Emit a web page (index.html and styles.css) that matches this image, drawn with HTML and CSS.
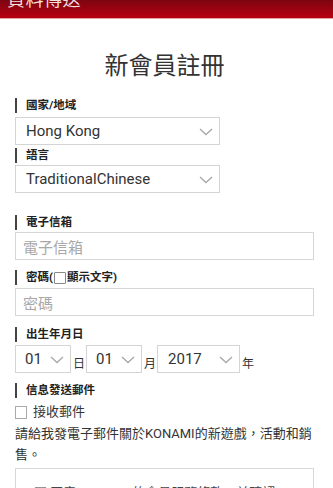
FILE: index.html
```html
<!DOCTYPE html>
<html lang="zh-Hant">
<head>
<meta charset="utf-8">
<link rel="stylesheet" href="styles.css">
</head>
<body>
<header class="topbar"><span class="topbar-title">資料傳送</span></header>
<main class="page">
  <h1 class="title">新會員註冊</h1>

  <div class="label">國家/地域</div>
  <div class="select select-wide"><span>Hong Kong</span><svg class="chev" viewBox="0 0 14 8"><path d="M1 1l6 5.5L13 1"/></svg></div>

  <div class="label label-tight">語言</div>
  <div class="select select-wide"><span>TraditionalChinese</span><svg class="chev" viewBox="0 0 14 8"><path d="M1 1l6 5.5L13 1"/></svg></div>

  <div class="label label-gap-lg">電子信箱</div>
  <div class="input">電子信箱</div>

  <div class="label label-gap">密碼(<span class="mini-check"></span>顯示文字)</div>
  <div class="input">密碼</div>

  <div class="label label-gap-md">出生年月日</div>
  <div class="date-row">
    <div class="select sel-day"><span>01</span><svg class="chev" viewBox="0 0 14 8"><path d="M1 1l6 5.5L13 1"/></svg></div>
    <span class="unit">日</span>
    <div class="select sel-day"><span>01</span><svg class="chev" viewBox="0 0 14 8"><path d="M1 1l6 5.5L13 1"/></svg></div>
    <span class="unit">月</span>
    <div class="select sel-year"><span>2017</span><svg class="chev" viewBox="0 0 14 8"><path d="M1 1l6 5.5L13 1"/></svg></div>
    <span class="unit">年</span>
  </div>

  <div class="label label-gap">信息發送郵件</div>
  <div class="check-row"><span class="checkbox"></span><span>接收郵件</span></div>
  <p class="note">請給我發電子郵件關於KONAMI的新遊戲，活動和銷售。</p>

  <div class="terms"><span class="terms-text">□ 同意 KONAMI 的會員服務條款，並確認</span></div>
</main>
</body>
</html>
```
FILE: styles.css
```css
* { box-sizing: border-box; }
html, body { margin: 0; padding: 0; background: #fff; }
body {
  font-family: Roboto, "Noto Sans CJK TC", "Noto Sans", sans-serif;
  color: #333;
  overflow: hidden;
  height: 488px;
}
.topbar {
  height: 19px;
  background: linear-gradient(#7c0510, #b80012);
  border-bottom: 1px solid #e4a0a4;
  overflow: hidden;
  padding-left: 7px;
}
.topbar-title {
  display: block;
  color: #f4dede;
  font-size: 18px;
  line-height: 18px;
  margin-top: -9px;
  letter-spacing: 0.5px;
}
.page {
  padding: 0 19px 0 15px;
}
.title {
  margin: 31px 0 0;
  font-size: 24px;
  line-height: 32px;
  font-weight: 400;
  text-align: center;
  color: #333;
}
.label {
  margin-top: 16px;
  height: 15px;
  border-left: 2px solid #444;
  padding-left: 9px;
  font-size: 11.5px;
  line-height: 15px;
  font-weight: 700;
  color: #222;
  display: flex;
  align-items: center;
}
.label-tight { margin-top: 3px; }
.label-gap-lg { margin-top: 22px; }
.label-gap { margin-top: 10px; }
.label-gap-md { margin-top: 11px; }
.mini-check {
  display: inline-block;
  width: 12px;
  height: 12px;
  border: 1px solid #888;
  border-radius: 1px;
  margin: 0 1px;
  background: #fff;
}
.label-gap-lg + .input { margin-top: 2px; }
.select {
  margin-top: 4px;
  height: 28px;
  border: 1px solid #d4d4d4;
  display: flex;
  align-items: center;
  justify-content: space-between;
  padding: 0 6px 0 10px;
  font-size: 15px;
  color: #333;
}
.label-tight + .select { margin-top: 2px; }
.select-wide { width: 205px; }
.chev {
  width: 14px;
  height: 8px;
  fill: none;
  stroke: #aaa;
  stroke-width: 1.4;
  margin-top: 1px;
}
.input {
  margin-top: 3px;
  height: 28px;
  border: 1px solid #d6d6d6;
  padding-left: 7px;
  display: flex;
  align-items: center;
  font-size: 15px;
  color: #a8a8a8;
}
.date-row {
  margin-top: 3px;
  display: flex;
  align-items: flex-end;
}
.date-row .select { margin-top: 0; padding: 0 6px 0 9px; }
.sel-day { width: 56px; }
.sel-year { width: 83px; padding-left: 10px !important; }
.unit {
  font-size: 12px;
  line-height: 14px;
  padding: 0 1px 2px 2px;
  color: #333;
}
.check-row {
  margin-top: 7px;
  display: flex;
  align-items: center;
  gap: 6px;
  font-size: 13px;
  line-height: 14px;
  color: #333;
}
.checkbox {
  width: 12px;
  height: 13px;
  border: 1px solid #aaa;
  background: #fff;
}
.note {
  margin: 4px 0 0;
  font-size: 13px;
  line-height: 21px;
  color: #333;
}
.terms {
  margin-top: 3px;
  height: 40px;
  border: 1px solid #d8d8d8;
  border-bottom: none;
  padding: 14px 0 0 18px;
  font-size: 13px;
  line-height: 20px;
  color: #444;
}
```
